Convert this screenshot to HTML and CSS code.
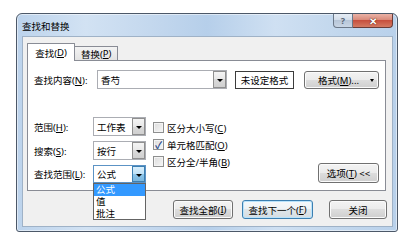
FILE: index.html
```html
<!DOCTYPE html>
<html>
<head>
<meta charset="utf-8">
<link rel="stylesheet" href="styles.css">
</head>
<body>
<div class="desk">
  <div class="win">
    <div class="titlebar">
      <span class="title">查找和替换</span>
      <div class="caps">
        <div class="cap help">?</div>
        <div class="cap close">✕</div>
      </div>
    </div>
    <div class="client">
      <div class="tabs">
        <div class="tab active">查找(<u>D</u>)</div>
        <div class="tab">替换(<u>P</u>)</div>
      </div>
      <div class="panel">
        <div class="row1">
          <span class="lbl1">查找内容(<u>N</u>):</span>
          <div class="combo wide"><span class="val">香芍</span><span class="arrow"></span></div>
          <div class="fmtbox">未设定格式</div>
          <div class="btn fmtbtn"><span>格式(<u>M</u>)...</span><span class="tri"></span></div>
        </div>
        <div class="lower">
          <div class="selgrid">
            <span class="lbl">范围(<u>H</u>):</span>
            <div class="combo"><span class="val">工作表</span><span class="arrow"></span></div>
            <span class="lbl">搜索(<u>S</u>):</span>
            <div class="combo"><span class="val">按行</span><span class="arrow"></span></div>
            <span class="lbl">查找范围(<u>L</u>):</span>
            <div class="combo focus"><span class="val">公式</span><span class="arrow"></span></div>
          </div>
          <div class="checks">
            <div class="chk"><span class="box"></span><span>区分大小写(<u>C</u>)</span></div>
            <div class="chk"><span class="box on">✓</span><span>单元格匹配(<u>O</u>)</span></div>
            <div class="chk"><span class="box"></span><span>区分全/半角(<u>B</u>)</span></div>
          </div>
          <div class="btn optbtn">选项(<u>T</u>) &lt;&lt;</div>
        </div>
      </div>
      <div class="footer">
        <div class="btn b1">查找全部(<u>I</u>)</div>
        <div class="btn b2 default">查找下一个(<u>F</u>)</div>
        <div class="btn b3">关闭</div>
      </div>
    </div>
  </div>
</div>
<div class="droplist">
  <div class="item sel">公式</div>
  <div class="item">值</div>
  <div class="item">批注</div>
</div>
</body>
</html>
```

FILE: styles.css
```css
* { box-sizing: border-box; }
body {
  margin: 0;
  background: #fff;
  font-family: "Noto Sans", "Noto Sans CJK SC", sans-serif;
  font-size: 9.5px;
  color: #000;
  position: relative;
}
u { text-decoration: underline; text-underline-offset: 1px; text-decoration-thickness: 1px; }
.desk { padding: 13px 0 0 16px; }
.win {
  width: 382px;
  height: 219px;
  border: 1px solid #4c5868;
  border-radius: 6px 6px 3px 3px;
  background: linear-gradient(to right, #bcd3ec 0%, #d2e2f3 18%, #c4d8ee 35%, #b6cfea 50%, #cfe0f2 68%, #c2d7ed 85%, #b9d1eb 100%);
  display: flex;
  flex-direction: column;
  box-shadow: inset 0 0 0 1px rgba(255,255,255,0.5);
}
.titlebar {
  height: 22px;
  display: flex;
  align-items: flex-start;
  padding-left: 5px;
}
.title { font-size: 9.5px; margin-top: 5px; color: #000; }
.caps { margin-left: auto; margin-right: 4px; display: flex; }
.cap {
  height: 14px;
  display: flex; align-items: center; justify-content: center;
  font-weight: bold;
}
.help {
  width: 20px;
  border: 1px solid #6b7888;
  border-top: none;
  border-radius: 0 0 0 4px;
  background: linear-gradient(#e6edf5 0%, #d3dde9 45%, #b7c6d8 50%, #c9d6e5 100%);
  color: #5a6675;
  font-size: 9px;
}
.close {
  width: 40px;
  border: 1px solid #6a3c38;
  border-top: none;
  border-left: none;
  border-radius: 0 0 4px 0;
  background: linear-gradient(#eab2a6 0%, #d98a7a 45%, #c7503e 50%, #d47a62 100%);
  color: #fff;
  font-size: 10px;
  text-shadow: 0 0 1px #5a1a10, 0 0 1px #5a1a10;
}
.client {
  margin: 0 4px 4px 5px;
  flex: 1;
  border: 1px solid #9fb2c7;
  background: #f0f0f0;
  padding: 6px 0 0 4px;
}
.tabs { display: flex; align-items: flex-end; height: 17px; }
.tab {
  height: 14px;
  padding: 0 6px;
  border: 1px solid #898c95;
  border-bottom: none;
  border-left: none;
  background: linear-gradient(#f3f3f3, #e3e3e3);
  display: flex; align-items: center;
}
.tab.active {
  height: 18px;
  width: 48px;
  margin-bottom: -1px;
  border-left: 1px solid #898c95;
  background: #fff;
  position: relative;
  z-index: 1;
  justify-content: center;
  border-radius: 1px 1px 0 0;
}
.panel {
  width: 359px;
  height: 131px;
  background: #fff;
  border: 1px solid #898c95;
  padding: 9px 6px 6px 6px;
}
.row1 { display: flex; align-items: center; height: 19px; }
.lbl1 { width: 63px; }
.combo {
  position: relative;
  height: 19px;
  width: 53px;
  border: 1px solid #abadb3;
  background: #fff;
  display: flex;
  align-items: center;
  padding-left: 3px;
}
.combo.wide { width: 130px; }
.combo .arrow {
  position: absolute;
  right: 0; top: 0; bottom: 0;
  width: 13px;
  border: 1px solid #8f8f8f;
  background: linear-gradient(#f4f4f4, #e8e8e8 50%, #dadada 50%, #d0d0d0);
}
.combo .arrow::after {
  content: "";
  position: absolute;
  left: 3px; top: 7px;
  border-left: 3px solid transparent;
  border-right: 3px solid transparent;
  border-top: 3px solid #000;
}
.combo.focus { border-color: #5c93c5; }
.combo.focus .arrow {
  border-color: #3c7fb1;
  background: linear-gradient(#d9eefb, #bfe2f7 50%, #8fc7ea 50%, #7ab7e0);
}
.fmtbox {
  margin-left: 8px;
  width: 59px;
  height: 18px;
  border: 1px solid #3c3c3c;
  display: flex; align-items: center; justify-content: center;
  background: #fff;
}
.btn {
  height: 19px;
  border: 1px solid #707070;
  border-radius: 3px;
  background: linear-gradient(#f3f3f3 0%, #ebebeb 50%, #dddddd 50%, #cfcfcf 100%);
  box-shadow: inset 0 0 0 1px #fbfbfb;
  display: flex; align-items: center; justify-content: center;
}
.fmtbtn { margin-left: 10px; width: 75px; height: 18px; position: relative; padding-right: 6px; }
.fmtbtn .tri {
  position: absolute; right: 4px; top: 7px;
  border-left: 2.5px solid transparent;
  border-right: 2.5px solid transparent;
  border-top: 3px solid #000;
}
.lower { display: flex; margin-top: 28px; }
.selgrid {
  display: grid;
  grid-template-columns: 59px 53px;
  grid-template-rows: 19px 19px 18px;
  row-gap: 5px;
  align-items: center;
}
.selgrid .combo { height: 100%; }
.checks { margin-left: 7px; padding-top: 2px; display: flex; flex-direction: column; }
.chk { height: 17px; display: flex; align-items: center; gap: 3px; }
.box {
  width: 11px; height: 11px;
  border: 1px solid #8e8f8f;
  background: linear-gradient(135deg, #dcdcdc, #f6f6f6);
  box-shadow: inset 0 0 0 1px #f4f4f4;
  display: flex; align-items: center; justify-content: center;
  font-size: 10px; color: #2b4a8c; font-weight: bold; line-height: 1;
}
.optbtn { margin-left: auto; align-self: flex-end; width: 61px; height: 20px; }
.footer { display: flex; justify-content: flex-end; margin-top: 9px; padding-right: 5px; }
.b1 { width: 60px; }
.b2 { width: 71px; margin-left: 9px; }
.b3 { width: 58px; margin-left: 16px; }
.btn.default {
  border-color: #3c7fb1;
  box-shadow: inset 0 0 0 1px #b9e3fb;
  background: linear-gradient(#f6f9fb 0%, #edf2f5 50%, #e0e6ea 50%, #d6dde2 100%);
}
.droplist {
  position: absolute;
  left: 93px; top: 183px;
  width: 53px; height: 37px;
  border: 1px solid #646464;
  background: #fff;
  padding-top: 0;
}
.item { height: 12px; line-height: 12px; padding-left: 2px; }
.item.sel { background: #3399ff; color: #fff; }
```
